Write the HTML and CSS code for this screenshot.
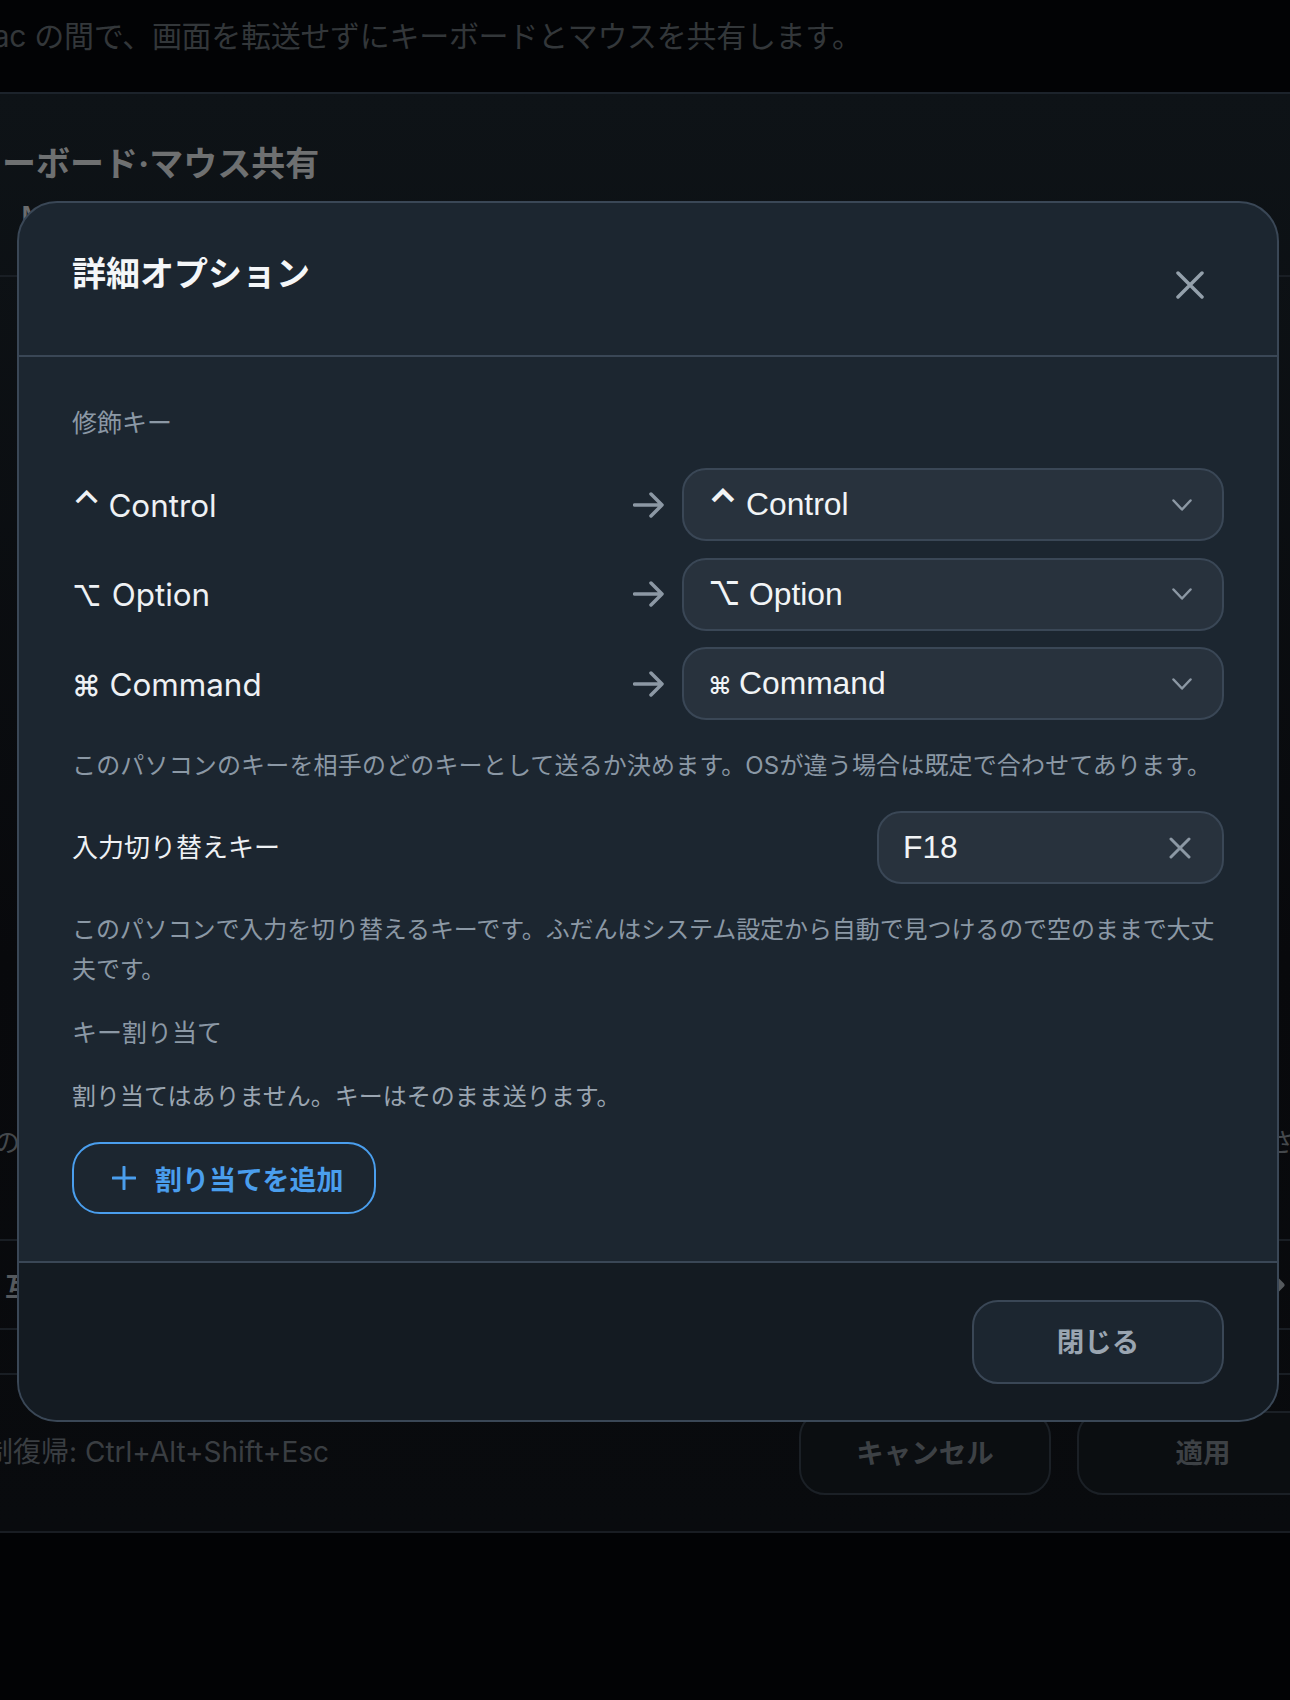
FILE: index.html
```html
<!DOCTYPE html>
<html lang="ja">
<head>
<meta charset="utf-8">
<title>詳細オプション</title>
<link rel="stylesheet" href="styles.css">
</head>
<body>
<div class="screen">
  <div class="under">
    <p class="under-lead">Mac の間で、画面を転送せずにキーボードとマウスを共有します。</p>
    <section class="under-panel">
      <header class="under-head">
        <h2 class="under-title">キーボード·マウス共有</h2>
        <svg class="under-close" viewBox="0 0 28 28"><path d="M2 2 26 26M26 2 2 26"/></svg>
      </header>
      <div class="under-tabs">Mac</div>
      <div class="under-note"><span>の</span><span>さ</span></div>
      <div class="under-row"><span>互</span><svg class="under-chevron" viewBox="0 0 14 22"><path d="M3 3 11 11 3 19"/></svg></div>
      <div class="under-row under-row-slim"></div>
      <footer class="under-foot">
        <span class="under-hint">強制復帰: Ctrl+Alt+Shift+Esc</span>
        <div class="under-actions">
          <span class="under-btn">キャンセル</span>
          <span class="under-btn">適用</span>
        </div>
      </footer>
    </section>
  </div>

  <div class="modal">
    <header class="modal-head">
      <h1 class="modal-title">詳細オプション</h1>
      <svg class="modal-close" viewBox="0 0 28 28"><path d="M2 2 26 26M26 2 2 26"/></svg>
    </header>
    <div class="modal-body">
      <div class="section-label">修飾キー</div>
      <div class="map-list">
        <div class="map-row">
          <span class="map-key"><span class="glyph glyph-ctrl">⌃</span>Control</span>
          <svg class="map-arrow" viewBox="0 0 31 26"><path d="M1.5 13H29M18 2 29 13 18 24"/></svg>
          <div class="select"><span><span class="glyph glyph-ctrl">⌃</span>Control</span><svg class="chevron" viewBox="0 0 20 12"><path d="M1.5 1.5 10 10.5 18.5 1.5"/></svg></div>
        </div>
        <div class="map-row">
          <span class="map-key"><span class="glyph glyph-opt">⌥</span>Option</span>
          <svg class="map-arrow" viewBox="0 0 31 26"><path d="M1.5 13H29M18 2 29 13 18 24"/></svg>
          <div class="select"><span><span class="glyph glyph-opt">⌥</span>Option</span><svg class="chevron" viewBox="0 0 20 12"><path d="M1.5 1.5 10 10.5 18.5 1.5"/></svg></div>
        </div>
        <div class="map-row">
          <span class="map-key"><span class="glyph glyph-cmd">⌘</span>Command</span>
          <svg class="map-arrow" viewBox="0 0 31 26"><path d="M1.5 13H29M18 2 29 13 18 24"/></svg>
          <div class="select"><span><span class="glyph glyph-cmd">⌘</span>Command</span><svg class="chevron" viewBox="0 0 20 12"><path d="M1.5 1.5 10 10.5 18.5 1.5"/></svg></div>
        </div>
      </div>
      <p class="help help-first">このパソコンのキーを相手のどのキーとして送るか決めます。OSが違う場合は既定で合わせてあります。</p>
      <div class="switch-row">
        <span class="switch-label">入力切り替えキー</span>
        <div class="field"><span>F18</span><svg class="field-clear" viewBox="0 0 22 22"><path d="M2 2 20 20M20 2 2 20"/></svg></div>
      </div>
      <p class="help help-second">このパソコンで入力を切り替えるキーです。ふだんはシステム設定から自動で見つけるので空のままで大丈夫です。</p>
      <div class="section-label section-label-second">キー割り当て</div>
      <p class="empty-note">割り当てはありません。キーはそのまま送ります。</p>
      <button class="add-btn" type="button"><svg class="add-icon" viewBox="0 0 24 24"><path d="M12 1V23M1 12H23"/></svg><span>割り当てを追加</span></button>
    </div>
    <footer class="modal-foot">
      <button class="close-btn" type="button"><span class="close-btn-label">閉じる</span></button>
    </footer>
  </div>
</div>
</body>
</html>
```
FILE: styles.css
```css
* { box-sizing: border-box; }
html, body { margin: 0; padding: 0; background: #020305; }
body { font-family: Inter, "Noto Sans CJK JP", sans-serif; }
h1, h2, p { margin: 0; }
svg { display: block; flex: none; fill: none; stroke-linecap: round; stroke-linejoin: round; }

.screen { position: relative; width: 1290px; height: 1700px; overflow: hidden; background: #020305; }

/* dimmed page beneath the modal */
.under { width: 1358px; margin-left: -28px; color: #33373b; }
.under-lead { height: 92px; margin-left: -6px; font-size: 30px; letter-spacing: -0.3px; line-height: 72px; color: #33373a; white-space: nowrap; }
.under-panel {
  margin: 0 -54px; padding: 0 54px; height: 1441px;
  border-top: 2px solid #1c232b; border-bottom: 2px solid #191d23;
  background: linear-gradient(180deg, #0e1317 0%, #08090c 60%, #090b0e 100%);
}
.under-head { display: flex; justify-content: space-between; align-items: flex-start; padding-top: 48px; height: 92px; }
.under-title { margin-left: -4px; font-size: 34px; line-height: 44px; font-weight: 700; color: #6e7071; }
.under-close { width: 28px; height: 28px; margin: 16px -20px 0 0; stroke: #55595d; stroke-width: 3.5; }
.under-tabs { height: 91px; padding: 13px 0 0 49px; border-bottom: 2px solid #191e24; font-size: 30px; line-height: 36px; font-weight: 500; color: #6a6c6e; }
.under-note { display: flex; justify-content: space-between; margin: 846px -2px 0 0; height: 40px; font-size: 26px; line-height: 40px; color: #44484c; padding-left: 0; }
.under-note span:first-child { margin-left: 22px; }
.under-note span:last-child { margin-right: 38px; }
.under-row {
  display: flex; justify-content: space-between; align-items: center;
  margin: 76px -54px 0; padding: 0 54px 0 87px; height: 89px;
  border-top: 2px solid #191e24; font-size: 26px; font-weight: 600; color: #55595d;
}
.under-row-slim { margin-top: 0; height: 45px; }
.under-chevron { width: 14px; height: 22px; margin-right: 45px; stroke: #55595d; stroke-width: 5; }
.under-foot {
  display: flex; justify-content: space-between; align-items: center;
  margin: 0 -54px; padding: 36px 54px 36px 54px; border-top: 2px solid #191e24;
}
.under-hint { margin: -2px 0 0 -15px; font-size: 28px; line-height: 36px; color: #3a3e42; white-space: nowrap; }
.under-actions { display: flex; gap: 26px; margin-right: 1px; }
.under-btn {
  display: flex; align-items: center; justify-content: center;
  width: 252px; height: 84px; padding-bottom: 4px; border: 2px solid #1b2026; border-radius: 26px;
  background: #0b0e11; font-size: 27.5px; font-weight: 600; color: #3d4145;
}

/* modal */
.modal {
  position: absolute; left: 17px; top: 201px; width: 1262px; height: 1221px;
  display: flex; flex-direction: column; overflow: hidden;
  border: 2px solid #3a4756; border-radius: 40px; background: #1c2630;
}
.modal-head { display: flex; justify-content: space-between; align-items: flex-start; height: 154px; padding: 49px 53px 0; border-bottom: 2px solid #3a4756; }
.modal-title { font-size: 34px; line-height: 44px; font-weight: 700; color: #f4f6f8; }
.modal-close { width: 28px; height: 28px; margin: 19px 20px 0 0; stroke: #94a0ab; stroke-width: 3.5; }
.modal-body { flex: 1; padding: 48px 53px 0; }
.section-label { font-size: 25px; line-height: 36px; color: #8b98a5; }
.section-label-second { margin-top: 25px; }
.map-list { display: flex; flex-direction: column; gap: 16.5px; margin-top: 27px; }
.map-row { display: flex; align-items: center; height: 73px; }
.map-key { flex: 1; padding-top: 2px; font-size: 31.4px; line-height: 40px; color: #eef1f4; white-space: nowrap; }
.map-arrow { width: 31px; height: 26px; margin-right: 18px; stroke: #8c98a4; stroke-width: 3.5; }
.select, .field {
  display: flex; justify-content: space-between; align-items: center;
  height: 73px; border: 2px solid #3a4756; border-radius: 24px; background: #28323d;
  font-family: "Liberation Sans", Inter, "Noto Sans CJK JP", sans-serif;
  font-size: 31.8px; color: #f1f4f6;
}
.select { width: 542px; padding: 0 30px 0 24px; }
.glyph { display: inline-block; line-height: 0; font-family: Inter, "DejaVu Sans", sans-serif; }
.map-key .glyph { font-weight: 500; }
.map-key .glyph-ctrl { width: 36.4px; font-size: 37px; }
.map-key .glyph-opt { width: 39.7px; font-size: 29px; }
.map-key .glyph-cmd { width: 37.5px; font-size: 29px; }
.select .glyph-ctrl { width: 38px; font-size: 37px; font-weight: 700; }
.select .glyph-opt { width: 41px; font-size: 32px; font-weight: 500; }
.select .glyph-cmd { width: 31px; font-size: 24px; font-weight: 500; }
.chevron { width: 20px; height: 12px; stroke: #8c98a4; stroke-width: 2.5; }
.help { font-size: 24px; line-height: 40px; color: #8b98a5; }
.help-first { margin-top: 26px; letter-spacing: 0.16px; white-space: nowrap; }
.help-second { margin-top: 26px; letter-spacing: -0.09px; }
.switch-row { display: flex; justify-content: space-between; align-items: center; margin-top: 25px; }
.switch-label { font-size: 26px; line-height: 36px; font-weight: 400; color: #eef1f4; }
.field { width: 347px; padding: 0 31px 0 24px; }
.field-clear { width: 22px; height: 22px; stroke: #8c98a4; stroke-width: 3; }
.empty-note { margin-top: 26px; font-size: 24px; line-height: 40px; color: #9aa5b1; }
.add-btn {
  display: flex; align-items: center; gap: 19px;
  width: 304px; height: 72px; margin-top: 25px; padding: 0 0 0 38px;
  border: 2px solid #4a9eed; border-radius: 28px; background: transparent;
  font-family: inherit; font-size: 27px; font-weight: 600; color: #4a9eed;
}
.add-icon { width: 24px; height: 24px; stroke: #4a9eed; stroke-width: 3; }
.modal-foot { display: flex; justify-content: flex-end; height: 159px; padding: 37px 53px 0; border-top: 2px solid #3a4756; background: #141b22; }
.close-btn {
  width: 252px; height: 84px; padding: 0 0 4px; border: 2px solid #3a4756; border-radius: 26px; background: #1c2630;
  font-family: inherit; font-size: 27.5px; font-weight: 600; color: #9aa5b1;
}
```
